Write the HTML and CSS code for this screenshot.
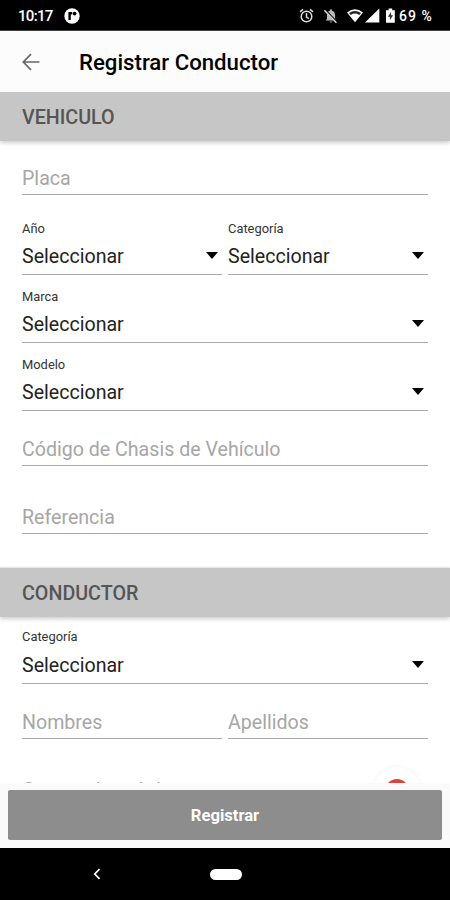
FILE: index.html
```html
<!DOCTYPE html>
<html lang="es">
<head>
<meta charset="utf-8">
<title>Registrar Conductor</title>
<link rel="stylesheet" href="styles.css">
</head>
<body>
<div class="screen">
  <div class="status">
    <span class="time">10:17</span>
    <svg class="app-dot" width="16" height="16" viewBox="0 0 16 16"><circle cx="8" cy="8" r="7.7" fill="#fff"/><path d="M5.600 12V5.200h2.600" fill="none" stroke="#000" stroke-width="2.400"/><circle cx="10.600" cy="5.600" r="1.900" fill="#000"/></svg>
    <svg class="icons" width="100" height="18" viewBox="0 0 100 18">
      <g fill="none" stroke="#ddd" stroke-width="1.500">
        <circle cx="8.500" cy="9.500" r="5.300"/><path d="M8.500 6v4l2.400 1.600M2 4.800l3-2.500M15 4.800l-3-2.500"/>
      </g>
      <path d="M29 12V8c0-2.500 1.300-3.800 3-4.200V2.600h2v1.200c1.800.4 3.100 1.900 3.100 4.200v4l1.400 1.400H27.600zM31.400 14.400h3.200l-1.600 1.400z" fill="#bbb"/>
      <path d="M27.200 3.200l12 12.600" stroke="#000" stroke-width="2.200"/><path d="M26.400 3.200l12 12.600" stroke="#ddd" stroke-width="1.500"/>
      <path d="M49 5.500Q57 -.8 65 5.500L57 15.200z" fill="#fff"/><path d="M51 6Q57 2 63 6L61.300 8Q57 5.200 52.700 8z" fill="#222"/>
      <path d="M67 15.500H81.300V1.500z" fill="#fff"/>
      <path d="M88 3.200h2.600V1.500h3.600v1.700h2.600v12.600H88z" fill="#fff"/><path d="M93.100 4.800l-3.200 4.900h2v3.600l3.200-5h-2z" fill="#333"/>
    </svg>
    <span class="percent">69 %</span>
  </div>
  <header class="bar">
    <svg width="18" height="18" viewBox="0 0 18 18"><path d="M17.500 9H1.500M9 1.200L1.300 9 9 16.800" fill="none" stroke="#666" stroke-width="1.700"/></svg>
    <h1>Registrar Conductor</h1>
  </header>
  <main class="form">
    <h2 class="section">VEHICULO</h2>
    <div class="row"><div class="field short"><span class="hint">Placa</span></div></div>
    <div class="row">
      <div class="field select first"><span class="label">Año</span><span class="value">Seleccionar</span><i class="caret"></i></div>
      <div class="field select first"><span class="label">Categoría</span><span class="value">Seleccionar</span><i class="caret"></i></div>
    </div>
    <div class="row"><div class="field select"><span class="label">Marca</span><span class="value">Seleccionar</span><i class="caret"></i></div></div>
    <div class="row"><div class="field select"><span class="label">Modelo</span><span class="value">Seleccionar</span><i class="caret"></i></div></div>
    <div class="row"><div class="field medium"><span class="hint">Código de Chasis de Vehículo</span></div></div>
    <div class="row"><div class="field"><span class="hint">Referencia</span></div></div>
    <h2 class="section second">CONDUCTOR</h2>
    <div class="row"><div class="field select compact"><span class="label">Categoría</span><span class="value">Seleccionar</span><i class="caret"></i></div></div>
    <div class="row">
      <div class="field medium"><span class="hint">Nombres</span></div>
      <div class="field medium"><span class="hint">Apellidos</span></div>
    </div>
    <div class="row"><div class="field"><span class="hint">Correo electrónico</span></div></div>
    <div class="fab"><svg width="24" height="24" viewBox="0 0 24 24"><circle cx="12" cy="12" r="12" fill="#d9453d"/></svg></div>
  </main>
  <footer class="action"><button>Registrar</button></footer>
  <nav class="nav">
    <svg width="8" height="12" viewBox="0 0 8 12"><path d="M6.500 1.200L1.800 6l4.700 4.800" fill="none" stroke="#fff" stroke-width="1.700"/></svg>
    <span class="pill"></span>
  </nav>
</div>
</body>
</html>
```
FILE: styles.css
```css
* { box-sizing: border-box; }
body { margin: 0; font-family: Roboto, sans-serif; background: #fff; }
.screen { width: 450px; height: 900px; display: flex; flex-direction: column; overflow: hidden; }
.status { height: 31px; flex: none; background: #000; color: #fff; display: flex; align-items: center; padding: 1px 0 0 18px; border-bottom: 1px solid #444; }
.time { width: 46px; font: 500 15px/20px Roboto, sans-serif; letter-spacing: -.7px; white-space: nowrap; }
.icons { margin-left: 218px; }
.percent { font: 500 14px/20px Roboto, sans-serif; margin-left: 1px; letter-spacing: 1px; white-space: nowrap; }
.bar { height: 61px; flex: none; background: #fcfcfc; display: flex; align-items: center; padding-left: 22px; gap: 39px; }
h1 { margin: 0; font-size: 22.200px; line-height: 28px; font-weight: 500; color: #000; white-space: nowrap; }
.form { height: 691px; flex: none; position: relative; overflow: hidden; background: #fff; }
.section { margin: 0; height: 49px; padding: 2px 22px 0; background: #c6c6c6; color: #555; font-size: 19.700px; line-height: 48px; font-weight: 500; box-shadow: 0 2px 4px rgba(0,0,0,.2), 0 -1px 1px rgba(0,0,0,.08); }
.second { margin-top: 34px; }
.row { display: flex; gap: 6px; padding: 0 22px; }
.field { flex: 1; height: 68px; position: relative; display: flex; flex-direction: column; justify-content: flex-end; border-bottom: 1px solid #aaa; white-space: nowrap; }
.short { height: 54px; }
.medium { height: 55px; }
.first { height: 80px; }
.compact { height: 67px; }
.hint { color: #a6a6a6; font-size: 19.600px; line-height: 24px; padding-bottom: 3px; }
.label { color: #333; font-size: 12.900px; line-height: 16px; }
.value { color: #222; font-size: 19.600px; line-height: 24px; margin: 8px 0 5px; }
.compact .value { margin-top: 9px; }
.caret { position: absolute; right: 4px; bottom: 15px; border: 6.500px solid transparent; border-top: 7px solid #000; border-bottom: 0; }
.fab { position: absolute; left: 373px; top: 675px; width: 48px; height: 48px; border-radius: 50%; background: #fff; box-shadow: 0 0 5px rgba(0,0,0,.06); display: flex; align-items: center; justify-content: center; }
.action { height: 65px; flex: none; padding: 7px 8px 8px; background: #fafafa; }
button { display: block; width: 100%; height: 50px; border: 0; border-radius: 2px; background: #8d8d8d; color: #fff; font: 700 16.600px/48px Roboto, sans-serif; padding: 2px 0 0; }
.nav { height: 52px; flex: none; background: #000; display: flex; align-items: center; padding-left: 93px; }
.pill { width: 32px; height: 11px; border-radius: 6px; background: #fff; margin-left: 109px; }
```
